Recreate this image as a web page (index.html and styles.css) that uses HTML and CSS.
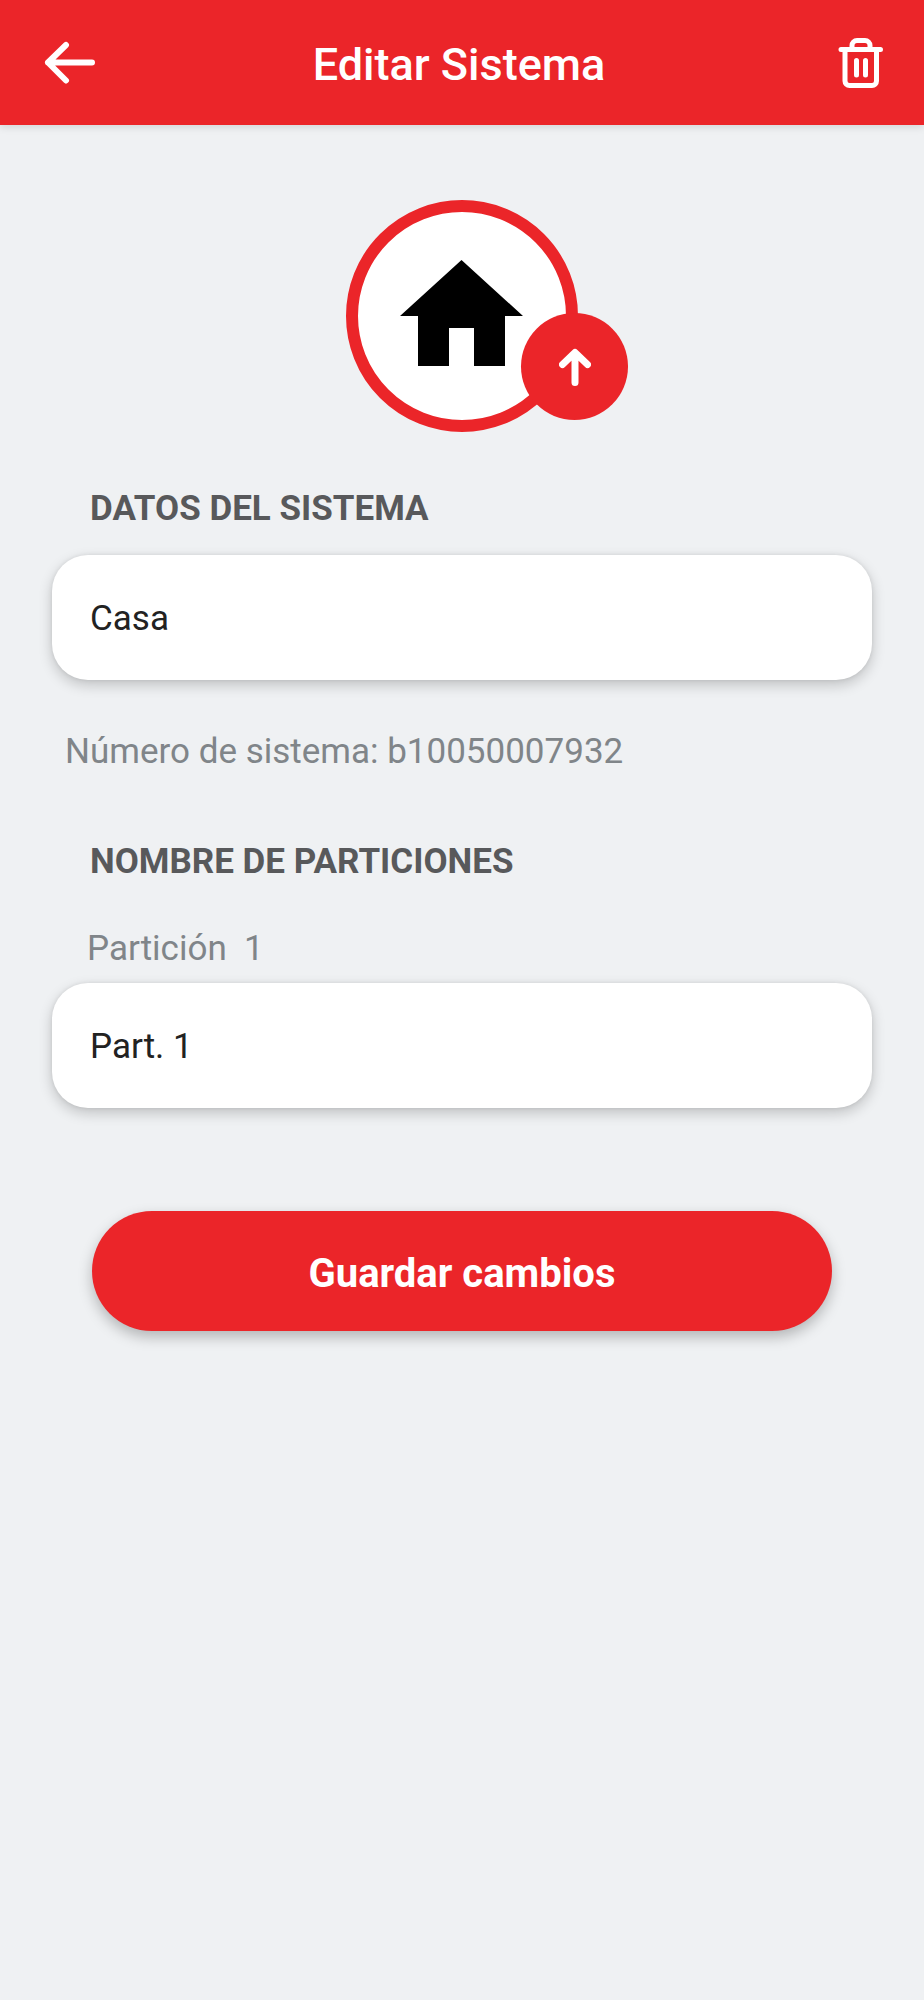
FILE: index.html
```html
<!DOCTYPE html>
<html lang="es">
<head>
  <meta charset="utf-8">
  <meta name="viewport" content="width=device-width, initial-scale=1">
  <title>Editar Sistema</title>
  <link rel="stylesheet" href="styles.css">
</head>
<body>
  <header class="topbar">
    <button class="icon-button" type="button" aria-label="Volver">
      <svg class="icon-back" viewBox="0 0 52 44" aria-hidden="true">
        <path d="M48 21.500H4M22 4 4 21.500 22 39.500"/>
      </svg>
    </button>
    <h1 class="topbar-title">Editar Sistema</h1>
    <button class="icon-button" type="button" aria-label="Eliminar sistema">
      <svg class="icon-trash" viewBox="0 0 46 52" aria-hidden="true">
        <path d="M3 12.500h39.500M14 12V8.500a5 5 0 0 1 5-5h8a5 5 0 0 1 5 5v3.500M7 13v31a4.500 4.500 0 0 0 4.500 4.500H34a4.500 4.500 0 0 0 4.500-4.500V13"/>
        <path d="M18.500 23.500v14.500M27.500 23.500v14.500"/>
      </svg>
    </button>
  </header>

  <main class="content">
    <div class="avatar">
      <svg class="avatar-house" viewBox="0 0 124 106" aria-hidden="true">
        <path d="M61.500 0 123 56h-18v50H74V68H49v38H18V56H0z"/>
      </svg>
      <button class="avatar-upload" type="button" aria-label="Subir imagen">
        <svg class="icon-up" viewBox="0 0 32 38" aria-hidden="true">
          <path d="M16 34.500V5M3.500 16.500 16 4.500l12.500 12"/>
        </svg>
      </button>
    </div>

    <form class="form">
      <h2 class="section-title" id="datos">Datos del sistema</h2>
      <input class="field" type="text" value="Casa" aria-labelledby="datos">
      <p class="system-number">Número de sistema: b10050007932</p>

      <h2 class="section-title">Nombre de particiones</h2>
      <label class="field-label" for="part-1">Partición&nbsp; 1</label>
      <input class="field" id="part-1" type="text" value="Part. 1">

      <button class="save" type="submit">Guardar cambios</button>
    </form>
  </main>
</body>
</html>
```

FILE: styles.css
```css
* {
  box-sizing: border-box;
}

body {
  margin: 0;
  min-height: 100vh;
  background: #eff1f3;
  font-family: Roboto, "Liberation Sans", sans-serif;
  font-size: 35px;
  line-height: 42px;
}

h1,
h2,
p {
  margin: 0;
}

button {
  border: 0;
  font-family: inherit;
  cursor: pointer;
}

svg {
  display: block;
}

.topbar {
  display: flex;
  align-items: center;
  justify-content: space-between;
  height: 125px;
  padding: 0 40px 0 44px;
  background: #eb2529;
  box-shadow: 0 2px 8px rgba(0, 0, 0, 0.12);
}

.topbar-title {
  padding: 5px 16px 0 0;
  color: #fff;
  font-size: 45px;
  font-weight: 500;
  line-height: 52px;
}

.icon-button {
  padding: 0;
  background: none;
}

.icon-back,
.icon-trash,
.icon-up {
  fill: none;
  stroke: #fff;
  stroke-linecap: round;
  stroke-linejoin: round;
}

.icon-back {
  width: 52px;
  height: 44px;
  stroke-width: 6px;
}

.icon-trash {
  width: 46px;
  height: 52px;
  stroke-width: 5px;
}

.content {
  padding: 75px 52px 60px;
}

.avatar {
  position: relative;
  display: flex;
  align-items: center;
  justify-content: center;
  width: 232px;
  height: 232px;
  margin: 0 auto;
  padding-bottom: 6px;
  border: 12px solid #eb2529;
  border-radius: 50%;
  background: #fff;
}

.avatar-house {
  width: 124px;
  height: 106px;
  fill: #000;
}

.avatar-upload {
  position: absolute;
  right: -62px;
  bottom: 0;
  display: flex;
  align-items: center;
  justify-content: center;
  width: 107px;
  height: 107px;
  padding: 0;
  border-radius: 50%;
  background: #eb2529;
}

.icon-up {
  width: 32px;
  height: 38px;
  stroke-width: 7px;
}

.form {
  display: flex;
  flex-direction: column;
  padding-top: 56px;
}

.section-title {
  padding-left: 38px;
  color: #58595b;
  font-size: 35px;
  font-weight: 700;
  text-transform: uppercase;
}

.field {
  width: 100%;
  height: 125px;
  padding: 1px 38px 0;
  border: 0;
  border-radius: 36px;
  background: #fff;
  box-shadow: 0 5px 14px rgba(0, 0, 0, 0.2), 0 0 4px rgba(0, 0, 0, 0.08);
  color: #222;
  font-family: inherit;
  font-size: 35px;
}

.section-title + .field {
  margin-top: 25px;
}

.system-number {
  padding: 51px 13px 68px;
  color: #808589;
}

.field-label {
  padding: 45px 35px 13px;
  color: #808589;
}

.save {
  height: 120px;
  margin: 103px 40px 0;
  padding: 4px 40px 0;
  border-radius: 60px;
  background: #eb2529;
  box-shadow: 0 6px 14px rgba(0, 0, 0, 0.25);
  color: #fff;
  font-size: 40px;
  font-weight: 700;
}
```
